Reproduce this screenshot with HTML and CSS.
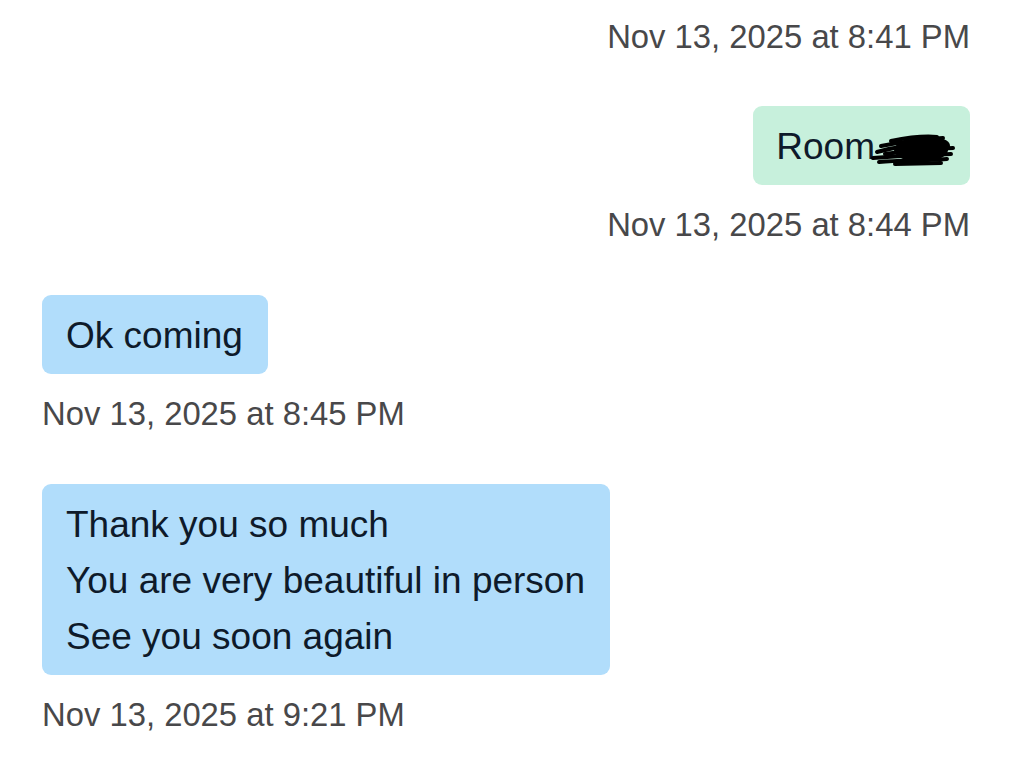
FILE: index.html
```html
<!DOCTYPE html>
<html>
<head>
<meta charset="utf-8">
<link rel="stylesheet" href="styles.css">
</head>
<body>
<div class="chat">
  <div class="stamp out">Nov 13, 2025 at 8:41 PM</div>
  <div class="msg out">
    <div class="bubble green">Room<svg class="scribble" width="84" height="34" viewBox="0 0 84 34"><g fill="none" stroke="#000" stroke-linecap="round" stroke-width="4"><path d="M2 25 L30 23 L60 22 L80 21"/><path d="M6 19 C20 15 40 11 70 10"/><path d="M10 13 C30 9 50 6 72 5"/><path d="M8 29 C30 27 50 28 76 26"/><path d="M14 21 C34 18 56 16 82 15"/><path d="M20 8 C40 4 56 3 66 4"/><path d="M24 31 L70 30"/></g><g fill="#000"><ellipse cx="50" cy="17" rx="27" ry="12"/><ellipse cx="66" cy="13" rx="13" ry="8"/></g></svg></div>
    <div class="stamp">Nov 13, 2025 at 8:44 PM</div>
  </div>
  <div class="msg in">
    <div class="bubble blue">Ok coming</div>
    <div class="stamp">Nov 13, 2025 at 8:45 PM</div>
  </div>
  <div class="msg in">
    <div class="bubble blue">Thank you so much<br>You are very beautiful in person<br>See you soon again</div>
    <div class="stamp">Nov 13, 2025 at 9:21 PM</div>
  </div>
</div>
</body>
</html>
```
FILE: styles.css
```css
html, body {
  margin: 0;
  padding: 0;
  background: #ffffff;
}
body {
  font-family: "Liberation Sans", Arial, sans-serif;
}
.chat {
  width: 1024px;
  height: 780px;
  box-sizing: border-box;
  padding: 17px 54px 0 42px;
  display: flex;
  flex-direction: column;
}
.stamp {
  font-size: 32.8px;
  line-height: 40px;
  color: #48484a;
  white-space: nowrap;
}
.stamp.out {
  align-self: flex-end;
}
.msg {
  display: flex;
  flex-direction: column;
  margin-top: 49px;
}
.msg.in {
  margin-top: 50px;
  align-items: flex-start;
}
.msg.out {
  align-items: flex-end;
}
.msg .stamp {
  margin-top: 20px;
}
.bubble {
  font-size: 37px;
  line-height: 56px;
  color: #0e1a2a;
  padding: 13px 25px 10px 24px;
  border-radius: 9px;
  white-space: nowrap;
}
.bubble.green {
  background: #c7f0dc;
  padding-left: 23px;
  padding-right: 15px;
  display: flex;
  align-items: center;
}
.bubble.blue {
  background: #b1ddfb;
}
.scribble {
  display: block;
  margin-left: -4px;
  margin-top: 6px;
}
```
